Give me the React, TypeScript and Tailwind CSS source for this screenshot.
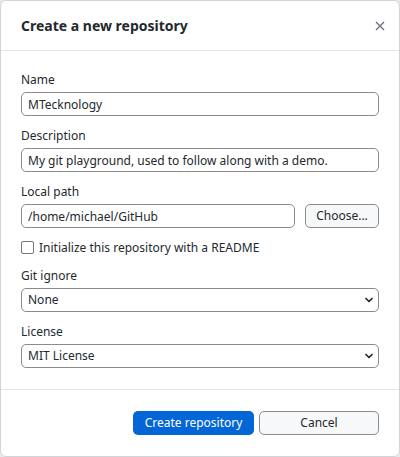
import { ChevronDown } from "lucide-react";

function Field({ label, children }: { label: string; children: React.ReactNode }) {
    return (
        <div className="flex flex-col gap-1">
            <label className="h-[17px] leading-[17px]">{label}</label>
            {children}
        </div>
    );
}

function TextBox({ value }: { value: string }) {
    return (
        <input
            defaultValue={value}
            className="h-6 w-full rounded-[5px] border border-[#8b8b8b] bg-white px-[6px] text-[12px] text-[#24292e] outline-none"
        />
    );
}

function Select({ value }: { value: string }) {
    return (
        <div className="relative">
            <select
                defaultValue={value}
                className="h-6 w-full appearance-none rounded-[5px] border border-[#8b8b8b] bg-white px-[6px] text-[12px] text-[#24292e] outline-none"
            >
                <option>{value}</option>
            </select>
            <ChevronDown
                size={12}
                strokeWidth={3.5}
                className="pointer-events-none absolute right-[4px] top-[6px] text-[#24292e]"
            />
        </div>
    );
}

export default function App() {
    return (
        <div
            className="h-[457px] w-[400px] bg-[#e9e9e9] text-[12px] text-[#24292e]"
            style={{ fontFamily: '"Noto Sans", "Open Sans", sans-serif' }}
        >
            <div className="flex h-full flex-col rounded-md border border-[#d1d5da] bg-white">
                <div className="flex h-[50px] items-center justify-between border-b border-[#e1e4e8] pl-5 pr-[14px]">
                    <h1 className="text-[14px] font-bold">Create a new repository</h1>
                    <svg width="10" height="10" viewBox="0 0 10 10" className="text-[#6a737d]">
                        <path d="M1 1 L9 9 M9 1 L1 9" stroke="currentColor" strokeWidth="1.4" />
                    </svg>
                </div>

                <div className="flex flex-col gap-[11px] border-b border-[#e1e4e8] px-5 pt-5 pb-[21px]">
                    <Field label="Name">
                        <TextBox value="MTecknology" />
                    </Field>
                    <Field label="Description">
                        <TextBox value="My git playground, used to follow along with a demo." />
                    </Field>
                    <Field label="Local path">
                        <div className="flex gap-[10px]">
                            <TextBox value="/home/michael/GitHub" />
                            <button className="h-6 w-[74px] shrink-0 rounded-[5px] border border-[#8b8b8b] bg-[#f6f8fa] text-[12px]">
                                Choose...
                            </button>
                        </div>
                    </Field>
                    <label className="flex h-[17px] items-center gap-[5px]">
                        <span className="h-[13px] w-[13px] rounded-[2px] border border-[#767676] bg-white" />
                        Initialize this repository with a README
                    </label>
                    <Field label="Git ignore">
                        <Select value="None" />
                    </Field>
                    <Field label="License">
                        <Select value="MIT License" />
                    </Field>
                </div>

                <div className="flex flex-1 items-start justify-end gap-[5px] px-5 pt-[21px]">
                    <button className="h-6 w-[121px] rounded-[5px] bg-[#0366d6] text-[12px] text-white">
                        Create repository
                    </button>
                    <button className="h-6 w-[120px] rounded-[5px] border border-[#8b8b8b] bg-[#f6f8fa] text-[12px]">
                        Cancel
                    </button>
                </div>
            </div>
        </div>
    );
}
